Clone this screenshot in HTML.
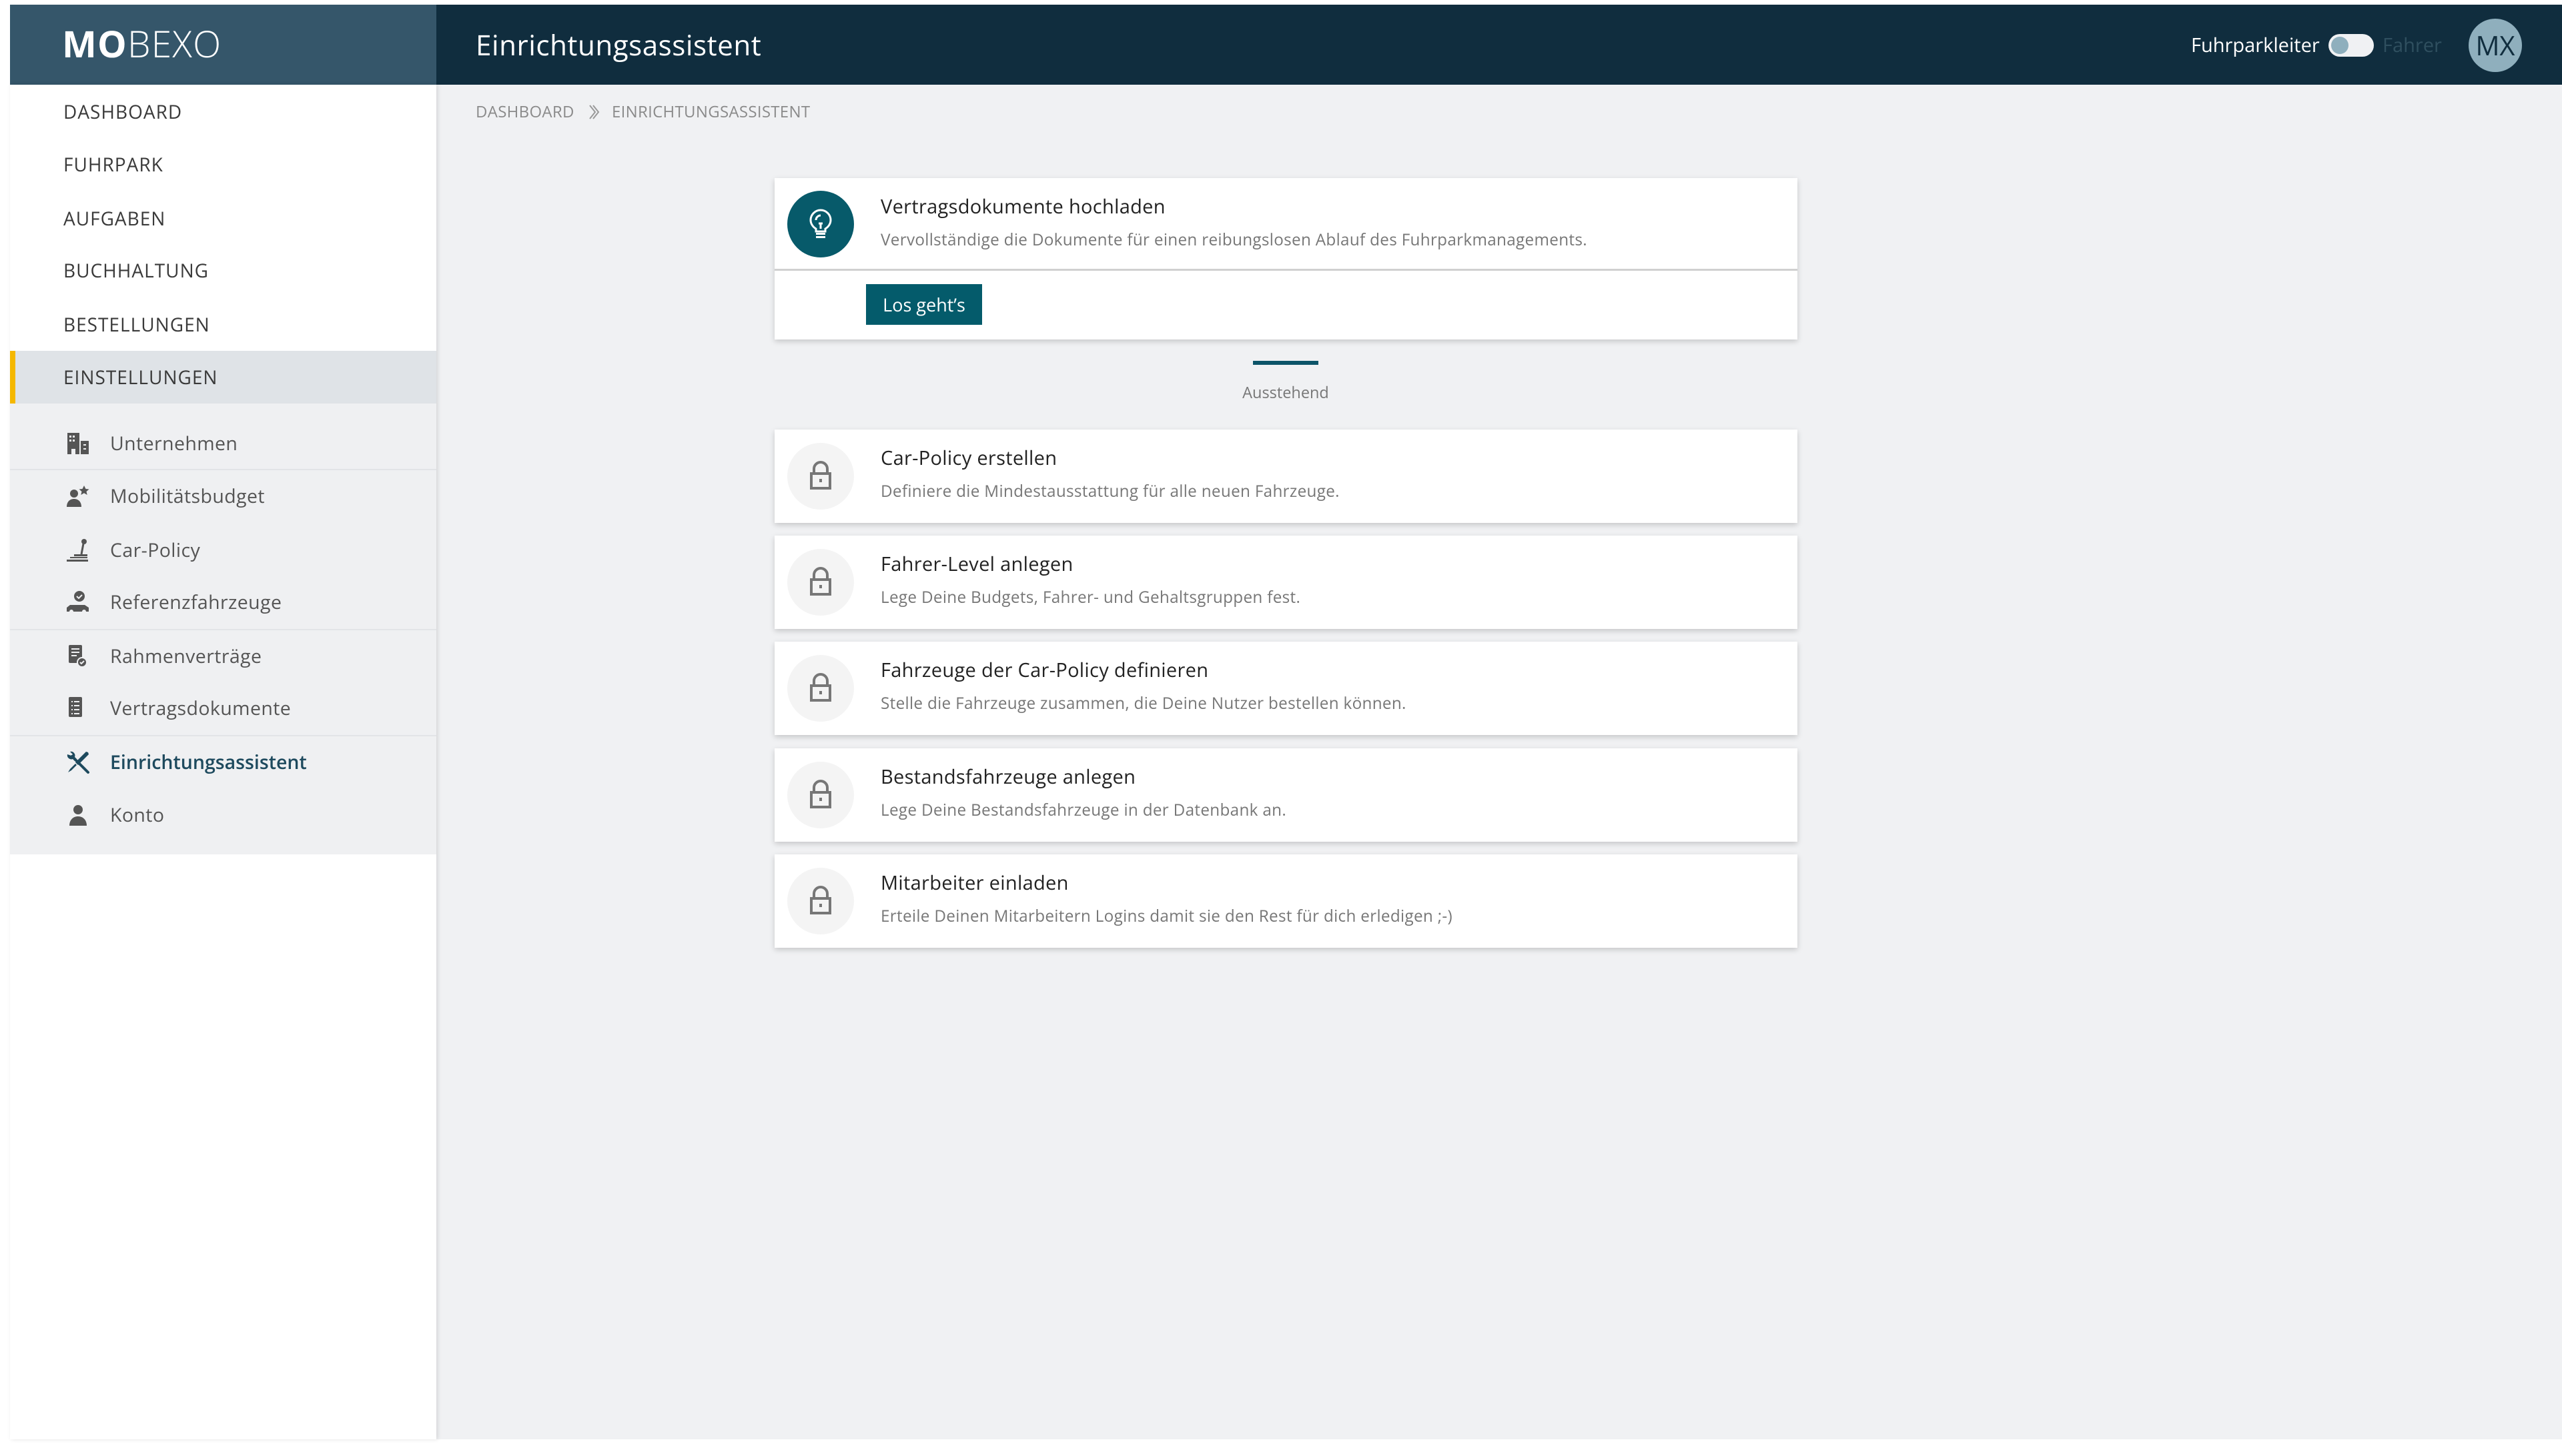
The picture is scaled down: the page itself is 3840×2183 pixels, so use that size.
<!DOCTYPE html>
<html><head><meta charset="utf-8"><style>
*{margin:0;padding:0;box-sizing:border-box}
body{width:3840px;height:2183px;background:#fff;font-family:"Open Sans","Liberation Sans",sans-serif;position:relative;overflow:hidden}
.a{position:absolute}
.nav{position:absolute;left:95px;font-size:28px;color:#3a3a3a;letter-spacing:1px;line-height:40px}
.sub{position:absolute;left:15px;width:639px;height:79px}
.sub .t{position:absolute;left:150px;top:2px;line-height:79px;font-size:28.5px;color:#555;letter-spacing:0.4px}
.sub svg{position:absolute;left:84px;top:23px}
.card{position:absolute;left:1161px;width:1533px;background:#fff;box-shadow:0 3px 8px rgba(0,0,0,.18)}
.lc{height:140px}
.lc .ci{position:absolute;left:19px;top:20px;width:100px;height:100px;border-radius:50%;background:#f4f4f4}
.lc .ci svg{position:absolute;left:32px;top:26px}
.tt{position:absolute;left:159px;font-size:29px;color:#222;letter-spacing:.3px;white-space:nowrap}
.ds{position:absolute;left:159px;font-size:24.3px;color:#777;letter-spacing:.3px;white-space:nowrap}
</style></head><body>
<div class="a" style="left:654px;top:127px;width:3186px;height:2031px;background:#f0f1f3"></div>
<div class="a" style="left:15px;top:7px;width:639px;height:120px;background:#35566a"></div>
<div class="a" style="left:654px;top:7px;width:3186px;height:120px;background:#102d3e"></div>
<div class="a" style="left:93px;top:36px;font-size:55px;color:#fff;line-height:60px;letter-spacing:1.2px"><b style="font-weight:700">MO</b><span style="font-weight:300">BEXO</span></div>
<div class="a" style="left:713px;top:42px;font-size:42.2px;color:#fff;line-height:52px;letter-spacing:.5px">Einrichtungsassistent</div>
<div class="a" style="left:3284px;top:50px;font-size:29px;color:#fff;line-height:36px">Fuhrparkleiter</div>
<div class="a" style="left:3490px;top:51px;width:68px;height:34px;border-radius:17px;background:#f0f1f3"></div>
<div class="a" style="left:3494px;top:55px;width:26px;height:26px;border-radius:50%;background:#8fafbd"></div>
<div class="a" style="left:3571px;top:50px;font-size:29px;color:#2f4f5f;line-height:36px">Fahrer</div>
<div class="a" style="left:3700px;top:28px;width:80px;height:80px;border-radius:50%;background:#8fafbd;color:#102d3e;font-size:40px;line-height:80px;text-align:center">MX</div>
<div class="a" style="left:15px;top:127px;width:639px;height:2031px;background:#fff;box-shadow:2px 0 6px rgba(0,0,0,.12)"></div>
<div class="nav" style="top:148px">DASHBOARD</div>
<div class="nav" style="top:227px">FUHRPARK</div>
<div class="nav" style="top:308px">AUFGABEN</div>
<div class="nav" style="top:386px">BUCHHALTUNG</div>
<div class="nav" style="top:467px">BESTELLUNGEN</div>
<div class="a" style="left:15px;top:526px;width:639px;height:79px;background:#dfe3e7"></div>
<div class="a" style="left:15px;top:526px;width:8px;height:79px;background:#f5b800"></div>
<div class="nav" style="top:546px">EINSTELLUNGEN</div>
<div class="a" style="left:15px;top:605px;width:639px;height:676px;background:#eff0f2"></div>
<div class="a" style="left:15px;top:703px;width:639px;height:2px;background:#e2e4e7"></div>
<div class="a" style="left:15px;top:943px;width:639px;height:2px;background:#e2e4e7"></div>
<div class="a" style="left:15px;top:1102px;width:639px;height:2px;background:#e2e4e7"></div>

<div class="sub" style="top:624px"><svg width="36" height="36" viewBox="0 0 36 36"><path d="M2 2h18v32h-6v-8h-6v8H2z" fill="#555"/><rect x="5" y="6" width="3" height="3" fill="#eff0f2"/><rect x="10" y="6" width="3" height="3" fill="#eff0f2"/><rect x="5" y="12" width="3" height="3" fill="#eff0f2"/><rect x="10" y="12" width="3" height="3" fill="#eff0f2"/><rect x="22" y="14" width="12" height="20" fill="#555"/><rect x="26" y="19" width="4" height="2" fill="#eff0f2"/><rect x="26" y="25" width="4" height="2" fill="#eff0f2"/></svg><div class="t">Unternehmen</div></div>
<div class="sub" style="top:703px"><svg width="36" height="36" viewBox="0 0 36 36"><circle cx="12" cy="14" r="6" fill="#555"/><path d="M1 34c0-8 5-12 11-12s11 4 11 12z" fill="#555"/><path d="M27 2l2.5 5 5 .5-4 3.5 1.2 5-4.7-2.7-4.7 2.7 1.2-5-4-3.5 5-.5z" fill="#555"/></svg><div class="t">Mobilitätsbudget</div></div>
<div class="sub" style="top:784px"><svg width="36" height="36" viewBox="0 0 36 36"><circle cx="27" cy="5" r="4" fill="#555"/><path d="M26 8l-3 16" stroke="#555" stroke-width="3"/><rect x="12" y="24" width="20" height="3" fill="#555"/><rect x="6" y="28" width="26" height="2" fill="#555"/><rect x="1" y="32" width="32" height="3" fill="#555"/></svg><div class="t">Car-Policy</div></div>
<div class="sub" style="top:862px"><svg width="36" height="36" viewBox="0 0 36 36"><circle cx="20" cy="9" r="8" fill="#555"/><path d="M16 9l3 3 5-5" stroke="#eff0f2" stroke-width="2" fill="none"/><path d="M1 32v-6l5-4h22l6 4v6z" fill="#555"/><circle cx="8" cy="32" r="3" fill="#eff0f2"/><circle cx="27" cy="32" r="3" fill="#eff0f2"/></svg><div class="t">Referenzfahrzeuge</div></div>
<div class="sub" style="top:943px"><svg width="36" height="36" viewBox="0 0 36 36"><rect x="4" y="1" width="20" height="27" rx="2" fill="#555"/><path d="M8 7h12M8 12h12M8 17h8" stroke="#eff0f2" stroke-width="2"/><circle cx="24" cy="27" r="7" fill="#555" stroke="#eff0f2" stroke-width="2"/><path d="M21 27l2 2 4-4" stroke="#eff0f2" stroke-width="2" fill="none"/></svg><div class="t">Rahmenverträge</div></div>
<div class="sub" style="top:1021px"><svg width="36" height="36" viewBox="0 0 36 36"><rect x="4" y="1" width="20" height="30" rx="2" fill="#555"/><path d="M8 8h2M12 8h8M8 14h2M12 14h8M8 20h2M12 20h8M8 26h2M12 26h8" stroke="#eff0f2" stroke-width="2"/></svg><div class="t">Vertragsdokumente</div></div>
<div class="sub" style="top:1102px"><svg width="36" height="36" viewBox="0 0 36 36"><path d="M9 9l24 24" stroke="#1e4a5e" stroke-width="4" stroke-linecap="round"/><path d="M2 6a6 6 0 0 0 8 7l3 3 3-3-3-3a6 6 0 0 0-7-8l4 4-2 2z" fill="#1e4a5e"/><path d="M33 3l-3-1-16 16 4 4 16-16z" fill="#1e4a5e"/><path d="M14 20l-8 8-3 5 5-3 8-8z" fill="#1e4a5e"/></svg><div class="t" style="color:#1e4a5e;font-weight:600;letter-spacing:0">Einrichtungsassistent</div></div>
<div class="sub" style="top:1181px"><svg width="36" height="36" viewBox="0 0 36 36"><circle cx="18" cy="10" r="7" fill="#555"/><path d="M5 34c0-9 6-14 13-14s13 5 13 14z" fill="#555"/></svg><div class="t">Konto</div></div>

<div class="a" style="left:713px;top:153px;font-size:24px;color:#8a8a8a;line-height:30px;letter-spacing:.3px">DASHBOARD</div>
<svg class="a" style="left:880px;top:156px" width="20" height="24" viewBox="0 0 20 24"><path d="M4 2l8 10-8 10M9 2l8 10-8 10" stroke="#999" stroke-width="2" fill="none"/></svg>
<div class="a" style="left:917px;top:153px;font-size:24px;color:#8a8a8a;line-height:30px;letter-spacing:.3px">EINRICHTUNGSASSISTENT</div>

<div class="card" style="top:267px;height:242px">
 <div class="a" style="left:19px;top:19px;width:100px;height:100px;border-radius:50%;background:#075a6a"></div>
 <svg class="a" style="left:49px;top:44px" width="40" height="50" viewBox="0 0 40 50"><path d="M13 32c-5-3-8-8-8-13a15 15 0 0 1 30 0c0 5-3 10-8 13v4H13z" stroke="#fff" stroke-width="3" fill="none"/><path d="M20 12a7 7 0 0 0-7 7M17 24h6M20 24v8" stroke="#fff" stroke-width="3" fill="none"/><rect x="13" y="38" width="14" height="3" fill="#fff"/><rect x="13" y="43" width="14" height="3" fill="#fff"/></svg>
 <div class="tt" style="top:23px;line-height:40px">Vertragsdokumente hochladen</div>
 <div class="ds" style="top:77px;line-height:32px">Vervollständige die Dokumente für einen reibungslosen Ablauf des Fuhrparkmanagements.</div>
 <div class="a" style="left:0;top:136px;width:1533px;height:3px;background:#d0d0d0"></div>
 <div class="a" style="left:137px;top:159px;width:174px;height:61px;background:#045b6b;color:#fff;font-size:27px;line-height:61px;text-align:center">Los geht’s</div>
</div>
<div class="a" style="left:1878px;top:541px;width:98px;height:6px;background:#0c5468"></div>
<div class="a" style="left:1777px;top:572px;width:300px;text-align:center;font-size:23.5px;color:#777;line-height:32px">Ausstehend</div>

<div class="card lc" style="top:644px"><div class="ci"><svg width="36" height="48" viewBox="0 0 36 48"><path d="M8 20v-7a10 10 0 0 1 20 0v7" stroke="#777" stroke-width="4" fill="none"/><rect x="4" y="20" width="28" height="22" stroke="#777" stroke-width="4" fill="none"/><rect x="16" y="28" width="4" height="5" fill="#777"/></svg></div><div class="tt" style="top:23px;line-height:40px">Car-Policy erstellen</div><div class="ds" style="top:77px;line-height:32px">Definiere die Mindestausstattung für alle neuen Fahrzeuge.</div></div>
<div class="card lc" style="top:803px"><div class="ci"><svg width="36" height="48" viewBox="0 0 36 48"><path d="M8 20v-7a10 10 0 0 1 20 0v7" stroke="#777" stroke-width="4" fill="none"/><rect x="4" y="20" width="28" height="22" stroke="#777" stroke-width="4" fill="none"/><rect x="16" y="28" width="4" height="5" fill="#777"/></svg></div><div class="tt" style="top:23px;line-height:40px">Fahrer-Level anlegen</div><div class="ds" style="top:77px;line-height:32px">Lege Deine Budgets, Fahrer- und Gehaltsgruppen fest.</div></div>
<div class="card lc" style="top:962px"><div class="ci"><svg width="36" height="48" viewBox="0 0 36 48"><path d="M8 20v-7a10 10 0 0 1 20 0v7" stroke="#777" stroke-width="4" fill="none"/><rect x="4" y="20" width="28" height="22" stroke="#777" stroke-width="4" fill="none"/><rect x="16" y="28" width="4" height="5" fill="#777"/></svg></div><div class="tt" style="top:23px;line-height:40px">Fahrzeuge der Car-Policy definieren</div><div class="ds" style="top:77px;line-height:32px">Stelle die Fahrzeuge zusammen, die Deine Nutzer bestellen können.</div></div>
<div class="card lc" style="top:1122px"><div class="ci"><svg width="36" height="48" viewBox="0 0 36 48"><path d="M8 20v-7a10 10 0 0 1 20 0v7" stroke="#777" stroke-width="4" fill="none"/><rect x="4" y="20" width="28" height="22" stroke="#777" stroke-width="4" fill="none"/><rect x="16" y="28" width="4" height="5" fill="#777"/></svg></div><div class="tt" style="top:23px;line-height:40px">Bestandsfahrzeuge anlegen</div><div class="ds" style="top:77px;line-height:32px">Lege Deine Bestandsfahrzeuge in der Datenbank an.</div></div>
<div class="card lc" style="top:1281px"><div class="ci"><svg width="36" height="48" viewBox="0 0 36 48"><path d="M8 20v-7a10 10 0 0 1 20 0v7" stroke="#777" stroke-width="4" fill="none"/><rect x="4" y="20" width="28" height="22" stroke="#777" stroke-width="4" fill="none"/><rect x="16" y="28" width="4" height="5" fill="#777"/></svg></div><div class="tt" style="top:23px;line-height:40px">Mitarbeiter einladen</div><div class="ds" style="top:77px;line-height:32px">Erteile Deinen Mitarbeitern Logins damit sie den Rest für dich erledigen ;-)</div></div>
</body></html>
